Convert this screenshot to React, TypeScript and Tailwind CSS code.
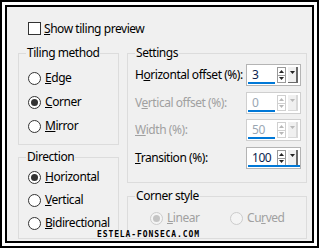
import React from "react";

function Radio({
  label,
  checked = false,
  disabled = false,
}: {
  label: React.ReactNode;
  checked?: boolean;
  disabled?: boolean;
}) {
  return (
    <div className="flex items-center h-[16px]">
      <div
        className={
          "w-[13px] h-[13px] rounded-full border flex items-center justify-center " +
          (disabled ? "border-[#cccccc] bg-[#f4f4f4]" : "border-[#333333] bg-white")
        }
      >
        {checked && (
          <div
            className={
              "w-[7px] h-[7px] rounded-full " +
              (disabled ? "bg-[#c4c4c4]" : "bg-[#333333]")
            }
          />
        )}
      </div>
      <span
        className={
          "ml-[4px] leading-[16px] whitespace-nowrap " +
          (disabled ? "text-[#a0a0a0]" : "text-black")
        }
      >
        {label}
      </span>
    </div>
  );
}

function Group({
  title,
  className,
  children,
}: {
  title: string;
  className: string;
  children: React.ReactNode;
}) {
  return (
    <div className={"relative border border-[#dcdcdc] " + className}>
      <span className="absolute left-[7px] top-[-9px] px-[1px] bg-[#f0f0f0] leading-[16px] text-black whitespace-nowrap">
        {title}
      </span>
      {children}
    </div>
  );
}

function Tri({ up, color }: { up?: boolean; color: string }) {
  return (
    <svg width="5" height="3" viewBox="0 0 5 3">
      {up ? (
        <polygon points="0,3 5,3 2.5,0" fill={color} />
      ) : (
        <polygon points="0,0 5,0 2.5,3" fill={color} />
      )}
    </svg>
  );
}

function Spin({
  value,
  bar,
  disabled = false,
}: {
  value: string;
  bar: number;
  disabled?: boolean;
}) {
  const arrow = disabled ? "#b8b8b8" : "#222222";
  return (
    <div
      className={
        "relative flex shrink-0 w-[55px] h-[22px] border bg-white " +
        (disabled ? "border-[#cfcfcf]" : "border-[#b4b4b4]")
      }
    >
      <span
        className={
          "pl-[5px] leading-[20px] " + (disabled ? "text-[#9aa6b2]" : "text-[#0b1f4f]")
        }
      >
        {value}
      </span>
      <div className="ml-auto mt-[2px] flex flex-col w-[9px] h-[16px]">
        <div
          className={
            "flex-1 flex items-center justify-center border " +
            (disabled ? "border-[#d0d0d0]" : "border-[#9a9a9a]")
          }
        >
          <Tri up color={arrow} />
        </div>
        <div
          className={
            "flex-1 flex items-center justify-center border border-t-0 " +
            (disabled ? "border-[#d0d0d0]" : "border-[#9a9a9a]")
          }
        >
          <Tri color={arrow} />
        </div>
      </div>
      <div
        className={
          "ml-[2px] mr-[2px] mt-[2px] w-[10px] h-[16px] flex justify-center pt-[4px] border-r-2 border-b " +
          (disabled ? "border-[#d8d8d8] bg-[#f0f0f0]" : "border-[#6a6a6a] bg-[#f0f0f0]")
        }
      >
        <Tri color={arrow} />
      </div>
      <div
        className="absolute left-[1px] bottom-[1px] h-[2px] bg-[#0078d7]"
        style={{ width: bar }}
      />
    </div>
  );
}

function Row({
  label,
  children,
  disabled = false,
  className = "",
}: {
  label: React.ReactNode;
  children: React.ReactNode;
  disabled?: boolean;
  className?: string;
}) {
  return (
    <div className={"flex items-center justify-between " + className}>
      <span className={"whitespace-nowrap " + (disabled ? "text-[#a0a0a0]" : "text-black")}>
        {label}
      </span>
      {children}
    </div>
  );
}

export default function App() {
  return (
    <div className="relative w-[319px] h-[248px] bg-white border-2 border-black p-[3px] font-['Noto_Sans',sans-serif] text-[12px] tracking-[-0.45px]">
      <div className="h-full border-2 border-black bg-[#f0f0f0] pt-[15px] pl-[11px]">
        {/* preview checkbox */}
        <div className="ml-[10px] flex items-center h-[13px]">
          <div className="w-[13px] h-[13px] border border-[#333333] bg-white" />
          <span className="ml-[3px] leading-[16px] whitespace-nowrap">
            <span className="underline">S</span>how tiling preview
          </span>
        </div>

        <div className="mt-[18px] flex gap-[8px]">
          {/* left column */}
          <div className="w-[101px] flex flex-col">
            <Group title="Tiling method" className="h-[92px] pt-[16px] pl-[9px]">
              <div className="flex flex-col gap-[8px]">
                <Radio label={<><span className="underline">E</span>dge</>} />
                <Radio checked label={<><span className="underline">C</span>orner</>} />
                <Radio label={<><span className="underline">M</span>irror</>} />
              </div>
            </Group>
            <Group title="Direction" className="mt-[12px] h-[82px] pt-[11px] pl-[9px]">
              <div className="flex flex-col gap-[7px]">
                <Radio checked label={<><span className="underline">H</span>orizontal</>} />
                <Radio label={<><span className="underline">V</span>ertical</>} />
                <Radio label={<><span className="underline">B</span>idirectional</>} />
              </div>
            </Group>
          </div>

          {/* right column */}
          <div className="w-[180px] flex flex-col">
            <Group title="Settings" className="h-[130px] pt-[10px] pl-[7px] pr-[5px]">
              <Row label={<>H<span className="underline">o</span>rizontal offset (%):</>}>
                <Spin value="3" bar={27} />
              </Row>
              <Row
                disabled
                className="mt-[6px]"
                label={<>V<span className="underline">e</span>rtical offset (%):</>}
              >
                <Spin disabled value="0" bar={27} />
              </Row>
              <Row
                disabled
                className="mt-[5px]"
                label={<><span className="underline">W</span>idth (%):</>}
              >
                <Spin disabled value="50" bar={27} />
              </Row>
              <Row
                className="mt-[6px]"
                label={<><span className="underline">T</span>ransition (%):</>}
              >
                <Spin value="100" bar={52} />
              </Row>
            </Group>
            <Group title="Corner style" className="mt-[13px] h-[43px] pt-[13px] pl-[22px]">
              <div className="flex">
                <div className="w-[80px]">
                  <Radio disabled checked label={<><span className="underline">L</span>inear</>} />
                </div>
                <Radio disabled label={<>Cu<span className="underline">r</span>ved</>} />
              </div>
            </Group>
          </div>
        </div>
      </div>

      {/* watermark */}
      <div className="absolute left-[95px] top-[228px] font-['DejaVu_Sans_Mono',monospace] font-bold text-[8px] tracking-[0.9px] leading-[10px] text-black">
        ESTELA-FONSECA.COM
      </div>
    </div>
  );
}
